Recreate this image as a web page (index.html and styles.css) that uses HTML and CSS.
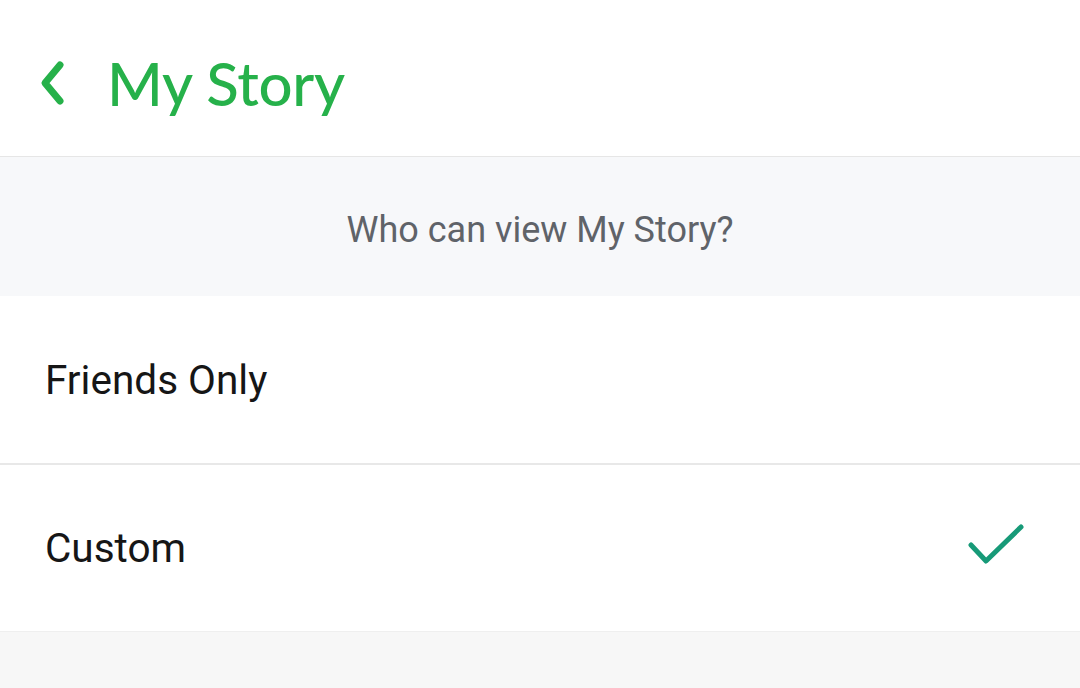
FILE: index.html
```html
<!DOCTYPE html>
<html>
<head>
<meta charset="utf-8">
<link rel="stylesheet" href="styles.css">
</head>
<body>
<div class="screen">
  <header class="header">
    <svg class="back" width="30" height="48" viewBox="0 0 30 48">
      <polyline points="22,6 7,24 22,42" fill="none" stroke="#26b14a" stroke-width="7" stroke-linecap="round" stroke-linejoin="round"/>
    </svg>
    <h1 class="title">My Story</h1>
  </header>
  <section class="question">
    <p>Who can view My Story?</p>
  </section>
  <ul class="options">
    <li class="option">Friends Only</li>
    <li class="option">
      <span>Custom</span>
      <svg class="check" width="60" height="46" viewBox="0 0 60 46">
        <polyline points="3,22 18,38 53,4" fill="none" stroke="#179a78" stroke-width="5" stroke-linecap="round" stroke-linejoin="round"/>
      </svg>
    </li>
  </ul>
  <div class="rest"></div>
</div>
</body>
</html>
```
FILE: styles.css
```css
* { box-sizing: border-box; }
html, body { margin: 0; padding: 0; }
body { width: 1080px; height: 688px; overflow: hidden; background: #f7f7f7; font-family: Roboto, "Liberation Sans", sans-serif; }
.screen { display: flex; flex-direction: column; height: 688px; }
.header {
  height: 157px;
  background: #fff;
  border-bottom: 1px solid #e6e6e6;
  display: flex;
  align-items: center;
  padding-left: 38px;
  padding-top: 9px;
}
.back { flex: none; }
.title {
  margin: 0 0 0 39px;
  font-family: Lato, "Open Sans", sans-serif;
  font-weight: 500;
  font-size: 60px;
  color: #26b14a;
  letter-spacing: -0.3px;
}
.question {
  height: 139px;
  background: #f7f8fa;
  display: flex;
  align-items: center;
  justify-content: center;
}
.question p {
  margin: 6px 0 0 0;
  font-size: 36px;
  color: #5f6369;
}
.options { list-style: none; margin: 0; padding: 0; background: #fff; }
.option {
  height: 167px;
  display: flex;
  align-items: center;
  justify-content: space-between;
  padding: 0 52px 0 45px;
  font-size: 40.5px;
  color: #161616;
}
.option + .option { border-top: 2px solid #e8e8e8; height: 168px; }
.check { margin-top: -4px; }
.rest { flex: 1; background: #f7f7f7; border-top: 1px solid #efefef; }
```
